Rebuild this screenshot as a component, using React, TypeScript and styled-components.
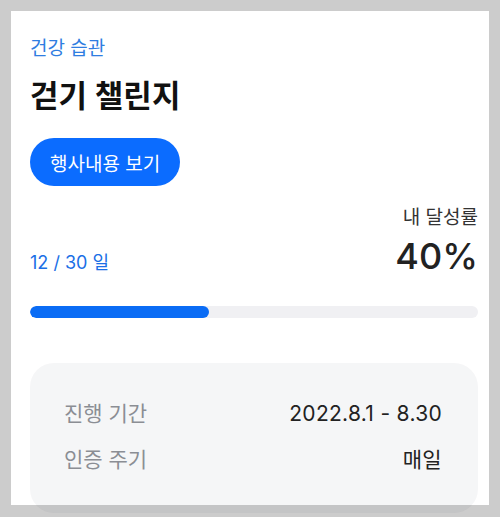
import styled, { createGlobalStyle } from 'styled-components'

const GlobalStyle = createGlobalStyle`
  html, body {
    margin: 0;
    padding: 0;
    background: #cccccc;
  }
  body {
    font-family: Inter, "Noto Sans CJK KR", "Noto Sans", sans-serif;
  }
`

const Page = styled.div`
  padding: 11px;
`

const Card = styled.div`
  width: 478px;
  height: 494px;
  box-sizing: border-box;
  background: #ffffff;
  padding: 26px 11px 0 19px;
  display: flex;
  flex-direction: column;

  & > * {
    flex-shrink: 0;
  }
`

const Category = styled.p`
  margin: 0;
  font-size: 19px;
  line-height: 24px;
  color: #2f7de1;
`

const Title = styled.h1`
  margin: 17px 0 0;
  font-size: 31px;
  line-height: 36px;
  font-weight: 600;
  color: #111111;
`

const PillButton = styled.button`
  margin-top: 24px;
  align-self: flex-start;
  height: 48px;
  padding: 0 20px;
  border: none;
  border-radius: 24px;
  background: #0b6cff;
  color: #ffffff;
  font-family: inherit;
  font-size: 19px;
  cursor: pointer;
`

const StatsRow = styled.div`
  margin-top: 18px;
  display: flex;
  justify-content: space-between;
  align-items: flex-end;
`

const DayCount = styled.span`
  font-size: 18px;
  line-height: 24px;
  color: #1b6fe6;
  padding-bottom: 3px;
`

const Rate = styled.div`
  display: flex;
  flex-direction: column;
  align-items: flex-end;
  gap: 6px;
`

const RateLabel = styled.span`
  font-size: 19px;
  line-height: 24px;
  color: #333333;
  transform: translateY(2px);
`

const RateValue = styled.span`
  font-size: 36px;
  line-height: 44px;
  font-weight: 500;
  color: #222222;
`

const Track = styled.div`
  margin-top: 28px;
  height: 12px;
  border-radius: 6px;
  background: #f0f0f3;
  overflow: hidden;
`

const Fill = styled.div`
  height: 100%;
  border-radius: 6px;
  background: #0a6cf5;
`

const InfoBox = styled.div`
  margin-top: 45px;
  height: 150px;
  box-sizing: border-box;
  border-radius: 24px;
  background: rgba(0, 20, 60, 0.04);
  padding: 37px 36px 0 34px;
  display: flex;
  flex-direction: column;
  gap: 18px;
`

const InfoRow = styled.div`
  display: flex;
  justify-content: space-between;
  font-size: 21px;
  line-height: 28px;
`

const InfoLabel = styled.span`
  color: #8b8e94;
`

const InfoValue = styled.span`
  color: #222222;
  letter-spacing: 0.3px;
`

const rows = [
  { label: '진행 기간', value: '2022.8.1 - 8.30' },
  { label: '인증 주기', value: '매일' },
]

export default function App() {
  const done = 12
  const total = 30
  const percent = Math.round((done / total) * 100)

  return (
    <Page>
      <GlobalStyle />
      <Card>
        <Category>건강 습관</Category>
        <Title>걷기 챌린지</Title>
        <PillButton>행사내용 보기</PillButton>
        <StatsRow>
          <DayCount>{done} / {total} 일</DayCount>
          <Rate>
            <RateLabel>내 달성률</RateLabel>
            <RateValue>{percent}%</RateValue>
          </Rate>
        </StatsRow>
        <Track>
          <Fill style={{ width: `${percent}%` }} />
        </Track>
        <InfoBox>
          {rows.map((r) => (
            <InfoRow key={r.label}>
              <InfoLabel>{r.label}</InfoLabel>
              <InfoValue>{r.value}</InfoValue>
            </InfoRow>
          ))}
        </InfoBox>
      </Card>
    </Page>
  )
}
